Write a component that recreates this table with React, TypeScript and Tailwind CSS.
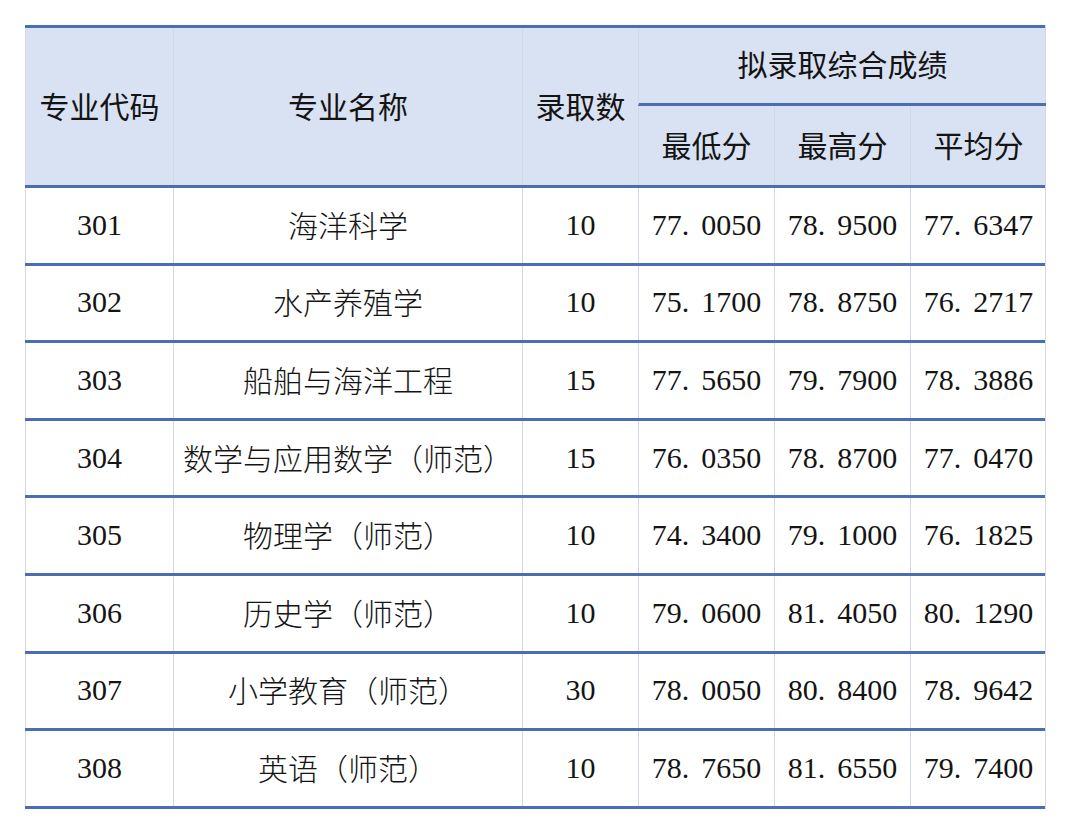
import React from 'react';

type Row = {
  code: string;
  name: string;
  count: string;
  min: string;
  max: string;
  avg: string;
};

const rows: Row[] = [
  { code: '301', name: '海洋科学', count: '10', min: '77.0050', max: '78.9500', avg: '77.6347' },
  { code: '302', name: '水产养殖学', count: '10', min: '75.1700', max: '78.8750', avg: '76.2717' },
  { code: '303', name: '船舶与海洋工程', count: '15', min: '77.5650', max: '79.7900', avg: '78.3886' },
  { code: '304', name: '数学与应用数学（师范）', count: '15', min: '76.0350', max: '78.8700', avg: '77.0470' },
  { code: '305', name: '物理学（师范）', count: '10', min: '74.3400', max: '79.1000', avg: '76.1825' },
  { code: '306', name: '历史学（师范）', count: '10', min: '79.0600', max: '81.4050', avg: '80.1290' },
  { code: '307', name: '小学教育（师范）', count: '30', min: '78.0050', max: '80.8400', avg: '78.9642' },
  { code: '308', name: '英语（师范）', count: '10', min: '78.7650', max: '81.6550', avg: '79.7400' },
];

const cjk = "font-['Noto_Sans_CJK_SC',sans-serif]";
const serif = "font-['Liberation_Serif','Noto_Sans_CJK_SC',serif]";

// wide gap after the decimal point, as in the source sheet
const Score: React.FC<{ value: string }> = ({ value }) => {
  const [a, b] = value.split('.');
  return (
    <span>
      {a}
      <span className="mr-[12px]">.</span>
      {b}
    </span>
  );
};

const cell = 'flex items-center justify-center border-l border-[#d3d9e4]';

export default function App() {
  return (
    <div className="w-[1068px] h-[834px] bg-white pt-[25px] pl-[25px] text-[#141414]">
      <div className="w-[1021px] border-r border-[#d3d9e4]">
        {/* header */}
        <div
          className={`grid grid-cols-[148px_349px_116px_136px_136px_136px] grid-rows-[78px_79px] bg-[#d9e2f3] border-t-[3px] border-[#4a6db3] text-[30px] ${cjk}`}
        >
          <div className={`${cell} row-span-2 pb-[2px]`}>专业代码</div>
          <div className={`${cell} row-span-2 pb-[2px]`}>专业名称</div>
          <div className={`${cell} row-span-2 pb-[2px]`}>录取数</div>
          <div className={`${cell} col-span-3 border-b-[3px] border-b-[#4a6db3] pb-[4px]`}>拟录取综合成绩</div>
          <div className={`${cell} pb-[2px]`}>最低分</div>
          <div className={`${cell} pb-[2px]`}>最高分</div>
          <div className={`${cell} pb-[2px]`}>平均分</div>
        </div>

        {/* rows */}
        {rows.map((r) => (
          <div
            key={r.code}
            className="grid grid-cols-[148px_349px_116px_136px_136px_136px] h-[77.6px] border-t-[3px] border-[#4a6db3]"
          >
            <div className={`${cell} ${serif} text-[30px] pb-[2px]`}>{r.code}</div>
            <div className={`${cell} ${cjk} font-light text-[30px] pb-[2px]`}>{r.name}</div>
            <div className={`${cell} ${serif} text-[30px] pb-[2px]`}>{r.count}</div>
            <div className={`${cell} ${serif} text-[30px] pb-[2px]`}>
              <Score value={r.min} />
            </div>
            <div className={`${cell} ${serif} text-[30px] pb-[2px]`}>
              <Score value={r.max} />
            </div>
            <div className={`${cell} ${serif} text-[30px] pb-[2px]`}>
              <Score value={r.avg} />
            </div>
          </div>
        ))}
        <div className="border-t-[3px] border-[#4a6db3]" />
      </div>
    </div>
  );
}
